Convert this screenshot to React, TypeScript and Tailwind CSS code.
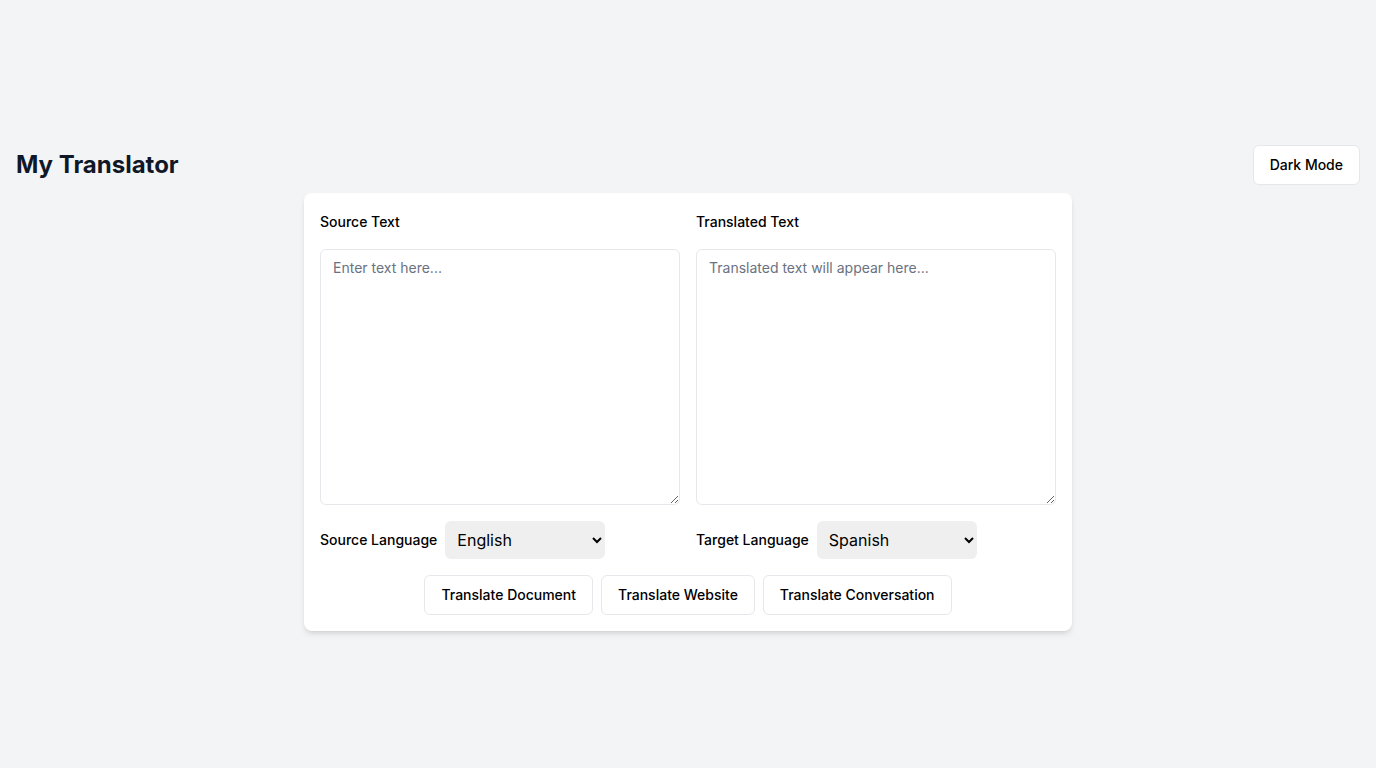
import { useState } from "react";

const languages = ["English", "Spanish", "French", "German", "Italian", "Japanese"];

export default function App() {
  const [source, setSource] = useState("");
  const [sourceLang, setSourceLang] = useState("English");
  const [targetLang, setTargetLang] = useState("Spanish");

  return (
    <div
      className="min-h-screen bg-gray-100 text-gray-900 flex flex-col justify-center px-4 pt-[8px]"
      style={{ fontFamily: "Inter, 'Noto Sans', sans-serif" }}
    >
      <header className="flex items-center justify-between mb-2">
        <h1 className="text-2xl font-bold text-gray-900">My Translator</h1>
        <button className="h-10 px-4 text-sm font-medium text-black bg-white border border-gray-200 rounded-md">
          Dark Mode
        </button>
      </header>

      <main className="w-full max-w-3xl mx-auto bg-white rounded-lg shadow-md p-4">
        <div className="grid grid-cols-2 gap-4">
          <div>
            <label className="block text-sm font-medium text-black mt-[3px] mb-[17px]">
              Source Text
            </label>
            <textarea
              className="block w-full h-64 px-3 py-2 text-sm border border-gray-200 rounded-md placeholder:text-gray-500 outline-none"
              placeholder="Enter text here..."
              value={source}
              onChange={(e) => setSource(e.target.value)}
            />
          </div>
          <div>
            <label className="block text-sm font-medium text-black mt-[3px] mb-[17px]">
              Translated Text
            </label>
            <textarea
              className="block w-full h-64 px-3 py-2 text-sm border border-gray-200 rounded-md placeholder:text-gray-500 outline-none"
              placeholder="Translated text will appear here..."
              readOnly
            />
          </div>

          <LanguagePicker
            label="Source Language"
            value={sourceLang}
            onChange={setSourceLang}
          />
          <LanguagePicker
            label="Target Language"
            value={targetLang}
            onChange={setTargetLang}
          />
        </div>

        <div className="flex justify-center gap-2 mt-4">
          {["Translate Document", "Translate Website", "Translate Conversation"].map(
            (item) => (
              <button
                key={item}
                className="h-10 px-4 text-sm font-medium text-black bg-white border border-gray-200 rounded-md"
              >
                {item}
              </button>
            )
          )}
        </div>
      </main>
    </div>
  );
}

function LanguagePicker({
  label,
  value,
  onChange,
}: {
  label: string;
  value: string;
  onChange: (v: string) => void;
}) {
  return (
    <div className="flex items-center">
      <span className="text-sm font-medium text-black mr-2">{label}</span>
      <select
        className="w-40 h-[38px] pl-2 pr-1 text-base bg-[#efefef] rounded-md text-black"
        value={value}
        onChange={(e) => onChange(e.target.value)}
      >
        {languages.map((lang) => (
          <option key={lang}>{lang}</option>
        ))}
      </select>
    </div>
  );
}
